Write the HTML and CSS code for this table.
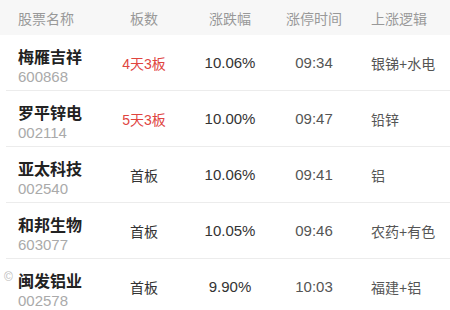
FILE: index.html
```html
<!DOCTYPE html>
<html lang="zh">
<head>
<meta charset="utf-8">
<link rel="stylesheet" href="styles.css">
</head>
<body>
<div class="table">
  <div class="head">
    <div class="c-name">股票名称</div>
    <div class="c-ban">板数</div>
    <div class="c-chg">涨跌幅</div>
    <div class="c-time">涨停时间</div>
    <div class="c-logic">上涨逻辑</div>
  </div>
  <div class="row">
    <div class="c-name"><div class="nm">梅雁吉祥</div><div class="code">600868</div></div>
    <div class="c-ban red">4天3板</div>
    <div class="c-chg">10.06%</div>
    <div class="c-time">09:34</div>
    <div class="c-logic">银锑+水电</div>
  </div>
  <div class="row">
    <div class="c-name"><div class="nm">罗平锌电</div><div class="code">002114</div></div>
    <div class="c-ban red">5天3板</div>
    <div class="c-chg">10.00%</div>
    <div class="c-time">09:47</div>
    <div class="c-logic">铅锌</div>
  </div>
  <div class="row">
    <div class="c-name"><div class="nm">亚太科技</div><div class="code">002540</div></div>
    <div class="c-ban">首板</div>
    <div class="c-chg">10.06%</div>
    <div class="c-time">09:41</div>
    <div class="c-logic">铝</div>
  </div>
  <div class="row">
    <div class="c-name"><div class="nm">和邦生物</div><div class="code">603077</div></div>
    <div class="c-ban">首板</div>
    <div class="c-chg">10.05%</div>
    <div class="c-time">09:46</div>
    <div class="c-logic">农药+有色</div>
  </div>
  <div class="row last">
    <div class="c-name"><div class="nm">闽发铝业</div><div class="code">002578</div></div>
    <div class="c-ban">首板</div>
    <div class="c-chg">9.90%</div>
    <div class="c-time">10:03</div>
    <div class="c-logic">福建+铝</div>
  </div>
  <div class="wm">©</div>
</div>
</body>
</html>
```
FILE: styles.css
```css
html, body {
  margin: 0;
  padding: 0;
  background: #fff;
}
body {
  font-family: "Liberation Sans", "Noto Sans CJK SC", sans-serif;
  width: 450px;
  height: 310px;
  overflow: hidden;
}
.table {
  position: relative;
}
.head, .row {
  display: grid;
  grid-template-columns: 92px 68px 104px 64px 1fr;
  align-items: center;
}
.head {
  height: 35px;
  background: #f7f7f7;
  padding-left: 18px;
  color: #999;
  font-size: 14px;
}
.row {
  height: 55px;
  margin-left: 6px;
  padding-left: 12px;
  border-bottom: 1px solid #ececec;
  font-size: 15px;
  color: #333;
}
.row.last {
  border-bottom: none;
}
.c-ban, .c-chg, .c-time {
  text-align: center;
}
.c-ban, .c-logic {
  font-size: 14px;
}
.c-logic {
  padding-left: 25px;
}
.row .c-name {
  padding-top: 8px;
}
.nm {
  font-size: 16px;
  font-weight: bold;
  color: #222;
  line-height: 20px;
}
.code {
  font-size: 15px;
  color: #aaa;
  line-height: 18px;
}
.red {
  color: #e0453f;
}
.row .c-time, .row .c-logic {
  color: #555;
}
.wm {
  position: absolute;
  left: 4px;
  top: 270px;
  font-size: 12px;
  color: #bbb;
}
```
